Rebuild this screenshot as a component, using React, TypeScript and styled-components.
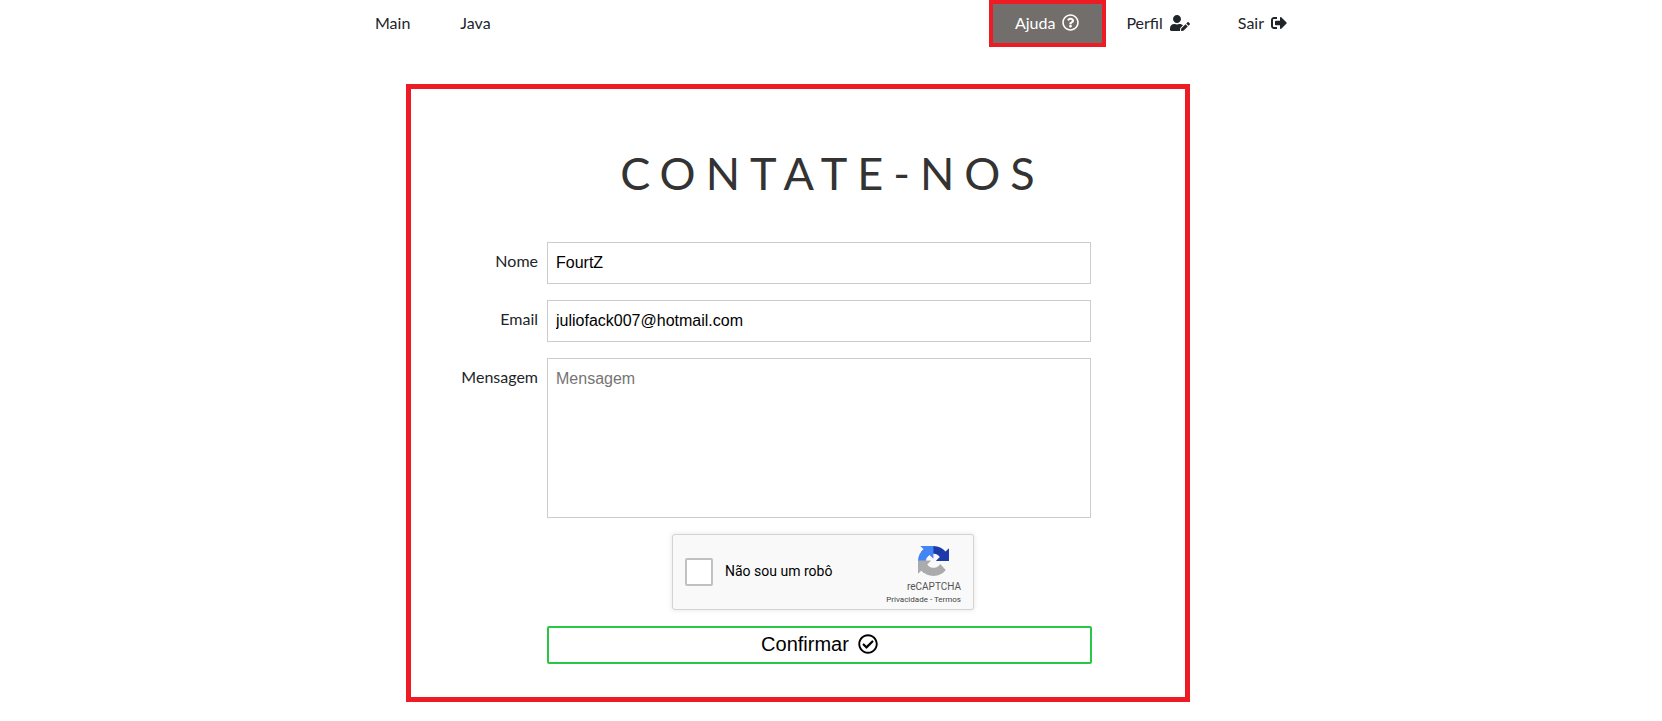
import React from "react";
import styled, { createGlobalStyle } from "styled-components";
import { FaRegQuestionCircle, FaUserEdit, FaSignOutAlt, FaRegCheckCircle } from "react-icons/fa";

const Global = createGlobalStyle`
  html, body { margin: 0; padding: 0; background: #fff; }
  body { font-family: Lato, "Liberation Sans", sans-serif; color: #212529; overflow: hidden; }
  * { box-sizing: border-box; }
`;

const Nav = styled.nav`
  display: flex;
  align-items: center;
  height: 47px;
  padding: 0 351px 0 351px;
  font-size: 16px;
`;
const NavGroup = styled.div<{ $gap?: number }>`
  display: flex;
  align-items: center;
  gap: ${(p) => p.$gap ?? 0}px;
  height: 100%;
`;
const Spacer = styled.div`flex: 1;`;
const NavItem = styled.a<{ $active?: boolean; $tight?: boolean }>`
  display: flex;
  align-items: center;
  gap: 7px;
  height: 47px;
  padding: ${(p) => (p.$active ? "0 23px 2px 22px" : p.$tight ? "0 24px 2px 20px" : "0 24px 2px")};
  color: ${(p) => (p.$active ? "#fff" : "#212529")};
  background: ${(p) => (p.$active ? "#726e6b" : "transparent")};
  border: ${(p) => (p.$active ? "4px solid #ed1c24" : "none")};
`;
const Card = styled.main`
  width: 784px;
  height: 618px;
  margin: 37px 0 0 406px;
  border: 5px solid #ed1c24;
  padding: 59px 95px 0 136px;
`;
const Title = styled.h1`
  margin: 0 0 44px;
  padding-left: 28px;
  font-size: 45px;
  font-weight: 400;
  line-height: 50px;
  letter-spacing: 10px;
  text-align: center;
  color: #333;
`;
const Row = styled.div`
  position: relative;
  margin-bottom: 16px;
`;
const Label = styled.label`
  position: absolute;
  right: 100%;
  margin-right: 9px;
  top: 9px;
  font-size: 16px;
  line-height: 20px;
  color: #212529;
  white-space: nowrap;
`;
const Input = styled.input`
  display: block;
  width: 544px;
  height: 42px;
  padding: 0 8px;
  border: 1px solid #ccc;
  font: 16px "Liberation Sans", sans-serif;
  color: #000;
  outline: none;
`;
const TextArea = styled.textarea`
  display: block;
  width: 544px;
  height: 160px;
  padding: 11px 8px 9px;
  border: 1px solid #ccc;
  font: 16px "Liberation Sans", sans-serif;
  resize: none;
  outline: none;
  &::placeholder { color: #757575; }
`;
const Captcha = styled.div`
  display: flex;
  align-items: center;
  width: 302px;
  height: 76px;
  margin: 0 0 16px 125px;
  padding: 0 12px;
  background: #f9f9f9;
  border: 1px solid #d3d3d3;
  border-radius: 3px;
  box-shadow: 0 0 4px 1px rgba(0, 0, 0, 0.08);
  font-family: Roboto, "Liberation Sans", sans-serif;
`;
const CheckBox = styled.span`
  width: 28px;
  height: 28px;
  background: #fff;
  border: 2px solid #c1c1c1;
  border-radius: 2px;
`;
const CaptchaLabel = styled.span`
  flex: 1;
  margin-left: 12px;
  padding-bottom: 2px;
  font-size: 14px;
  color: #000;
`;
const Brand = styled.div`
  display: flex;
  flex-direction: column;
  align-items: flex-end;
  padding-top: 6px;
  color: #555;
`;
const BrandLogo = styled.svg`
  width: 31px;
  height: 30px;
  margin: 0 12px 5px 0;
`;
const BrandName = styled.span`
  font-size: 10px;
  line-height: 12px;
`;
const BrandLinks = styled.span`
  margin-top: 2px;
  font-size: 8px;
  line-height: 10px;
  color: #444;
`;
const Submit = styled.button`
  display: flex;
  align-items: center;
  justify-content: center;
  gap: 9px;
  width: 545px;
  height: 38px;
  padding: 0 0 2px;
  background: #fff;
  border: 2px solid #28c745;
  border-radius: 2px;
  color: #000;
  font: 20px "Liberation Sans", sans-serif;
`;

export default function App() {
  return (
    <>
      <Global />
      <Nav>
        <NavGroup $gap={2}>
          <NavItem>Main</NavItem>
          <NavItem>Java</NavItem>
        </NavGroup>
        <Spacer />
        <NavGroup>
          <NavItem $active>Ajuda <FaRegQuestionCircle size={17} /></NavItem>
          <NavItem $tight>Perfil <FaUserEdit size={20} /></NavItem>
          <NavItem>Sair <FaSignOutAlt size={16} /></NavItem>
        </NavGroup>
      </Nav>
      <Card>
        <Title>CONTATE-NOS</Title>
        <Row>
          <Label>Nome</Label>
          <Input defaultValue="FourtZ" />
        </Row>
        <Row>
          <Label>Email</Label>
          <Input defaultValue="juliofack007@hotmail.com" />
        </Row>
        <Row>
          <Label>Mensagem</Label>
          <TextArea placeholder="Mensagem" />
        </Row>
        <Captcha>
          <CheckBox />
          <CaptchaLabel>Não sou um robô</CaptchaLabel>
          <Brand>
            <BrandLogo viewBox="0 0 64 64" preserveAspectRatio="none">
              <path d="M64 31.955l-.033-1.37V4.687l-7.16 7.16C50.948 4.674 42.033.093 32.05.093c-10.4 0-19.622 4.96-25.458 12.64l11.734 11.857a15.55 15.55 0 0 1 4.754-5.334c2.05-1.6 4.952-2.906 8.97-2.906.485 0 .86.057 1.135.163 4.986.394 9.308 3.14 11.852 7.126l-8.306 8.306 32.27.01" fill="#1c3aa9" />
              <path d="M31.862.002l-1.37.033H4.594l7.16 7.16C4.58 13.055.001 21.97.001 31.953c0 10.4 4.96 19.622 12.64 25.458l11.857-11.734a15.55 15.55 0 0 1-5.334-4.754c-1.6-2.05-2.906-4.952-2.906-8.97 0-.485.057-.86.163-1.135.394-4.986 3.14-9.308 7.126-11.852l8.306 8.306.01-32.27" fill="#4285f4" />
              <path d="M.002 31.953l.033 1.37v25.898l7.16-7.16c5.86 7.173 14.775 11.752 24.76 11.752 10.4 0 19.622-4.96 25.458-12.64L45.68 38.317a15.55 15.55 0 0 1-4.754 5.334c-2.04 1.6-4.95 2.906-8.97 2.906-.485 0-.86-.057-1.135-.163-4.986-.394-9.308-3.14-11.852-7.126l8.306-8.306-32.27-.01" fill="#ababab" />
            </BrandLogo>
            <BrandName>reCAPTCHA</BrandName>
            <BrandLinks>Privacidade - Termos</BrandLinks>
          </Brand>
        </Captcha>
        <Submit>Confirmar <FaRegCheckCircle size={20} /></Submit>
      </Card>
    </>
  );
}
